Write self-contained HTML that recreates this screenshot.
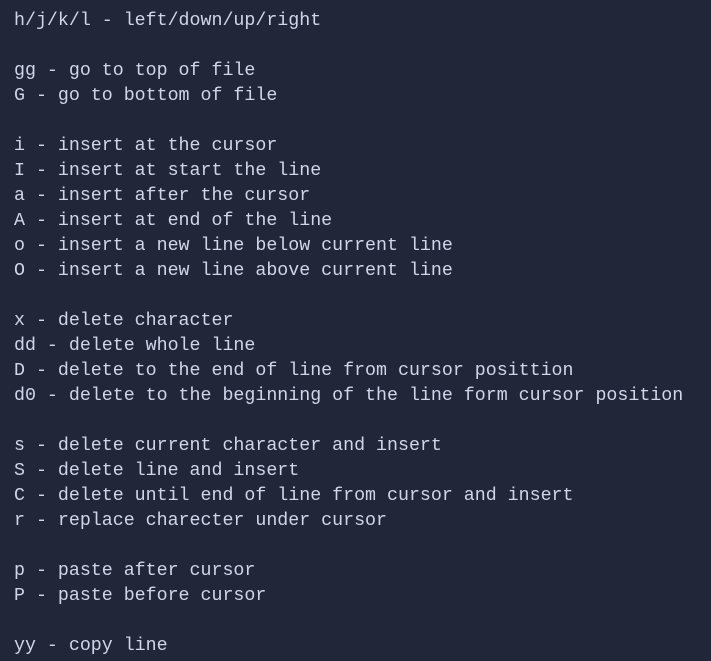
<!DOCTYPE html>
<html><head><style>
html,body{margin:0;padding:0;background:#222639;width:711px;height:661px;overflow:hidden}
pre{margin:0;padding:9px 0 0 14px;font-family:"Liberation Mono",monospace;font-size:18.3px;line-height:25px;color:#d0d6ea;white-space:pre}
</style></head><body><pre>h/j/k/l - left/down/up/right

gg - go to top of file
G - go to bottom of file

i - insert at the cursor
I - insert at start the line
a - insert after the cursor
A - insert at end of the line
o - insert a new line below current line
O - insert a new line above current line

x - delete character
dd - delete whole line
D - delete to the end of line from cursor posittion
d0 - delete to the beginning of the line form cursor position

s - delete current character and insert
S - delete line and insert
C - delete until end of line from cursor and insert
r - replace charecter under cursor

p - paste after cursor
P - paste before cursor

yy - copy line</pre></body></html>
